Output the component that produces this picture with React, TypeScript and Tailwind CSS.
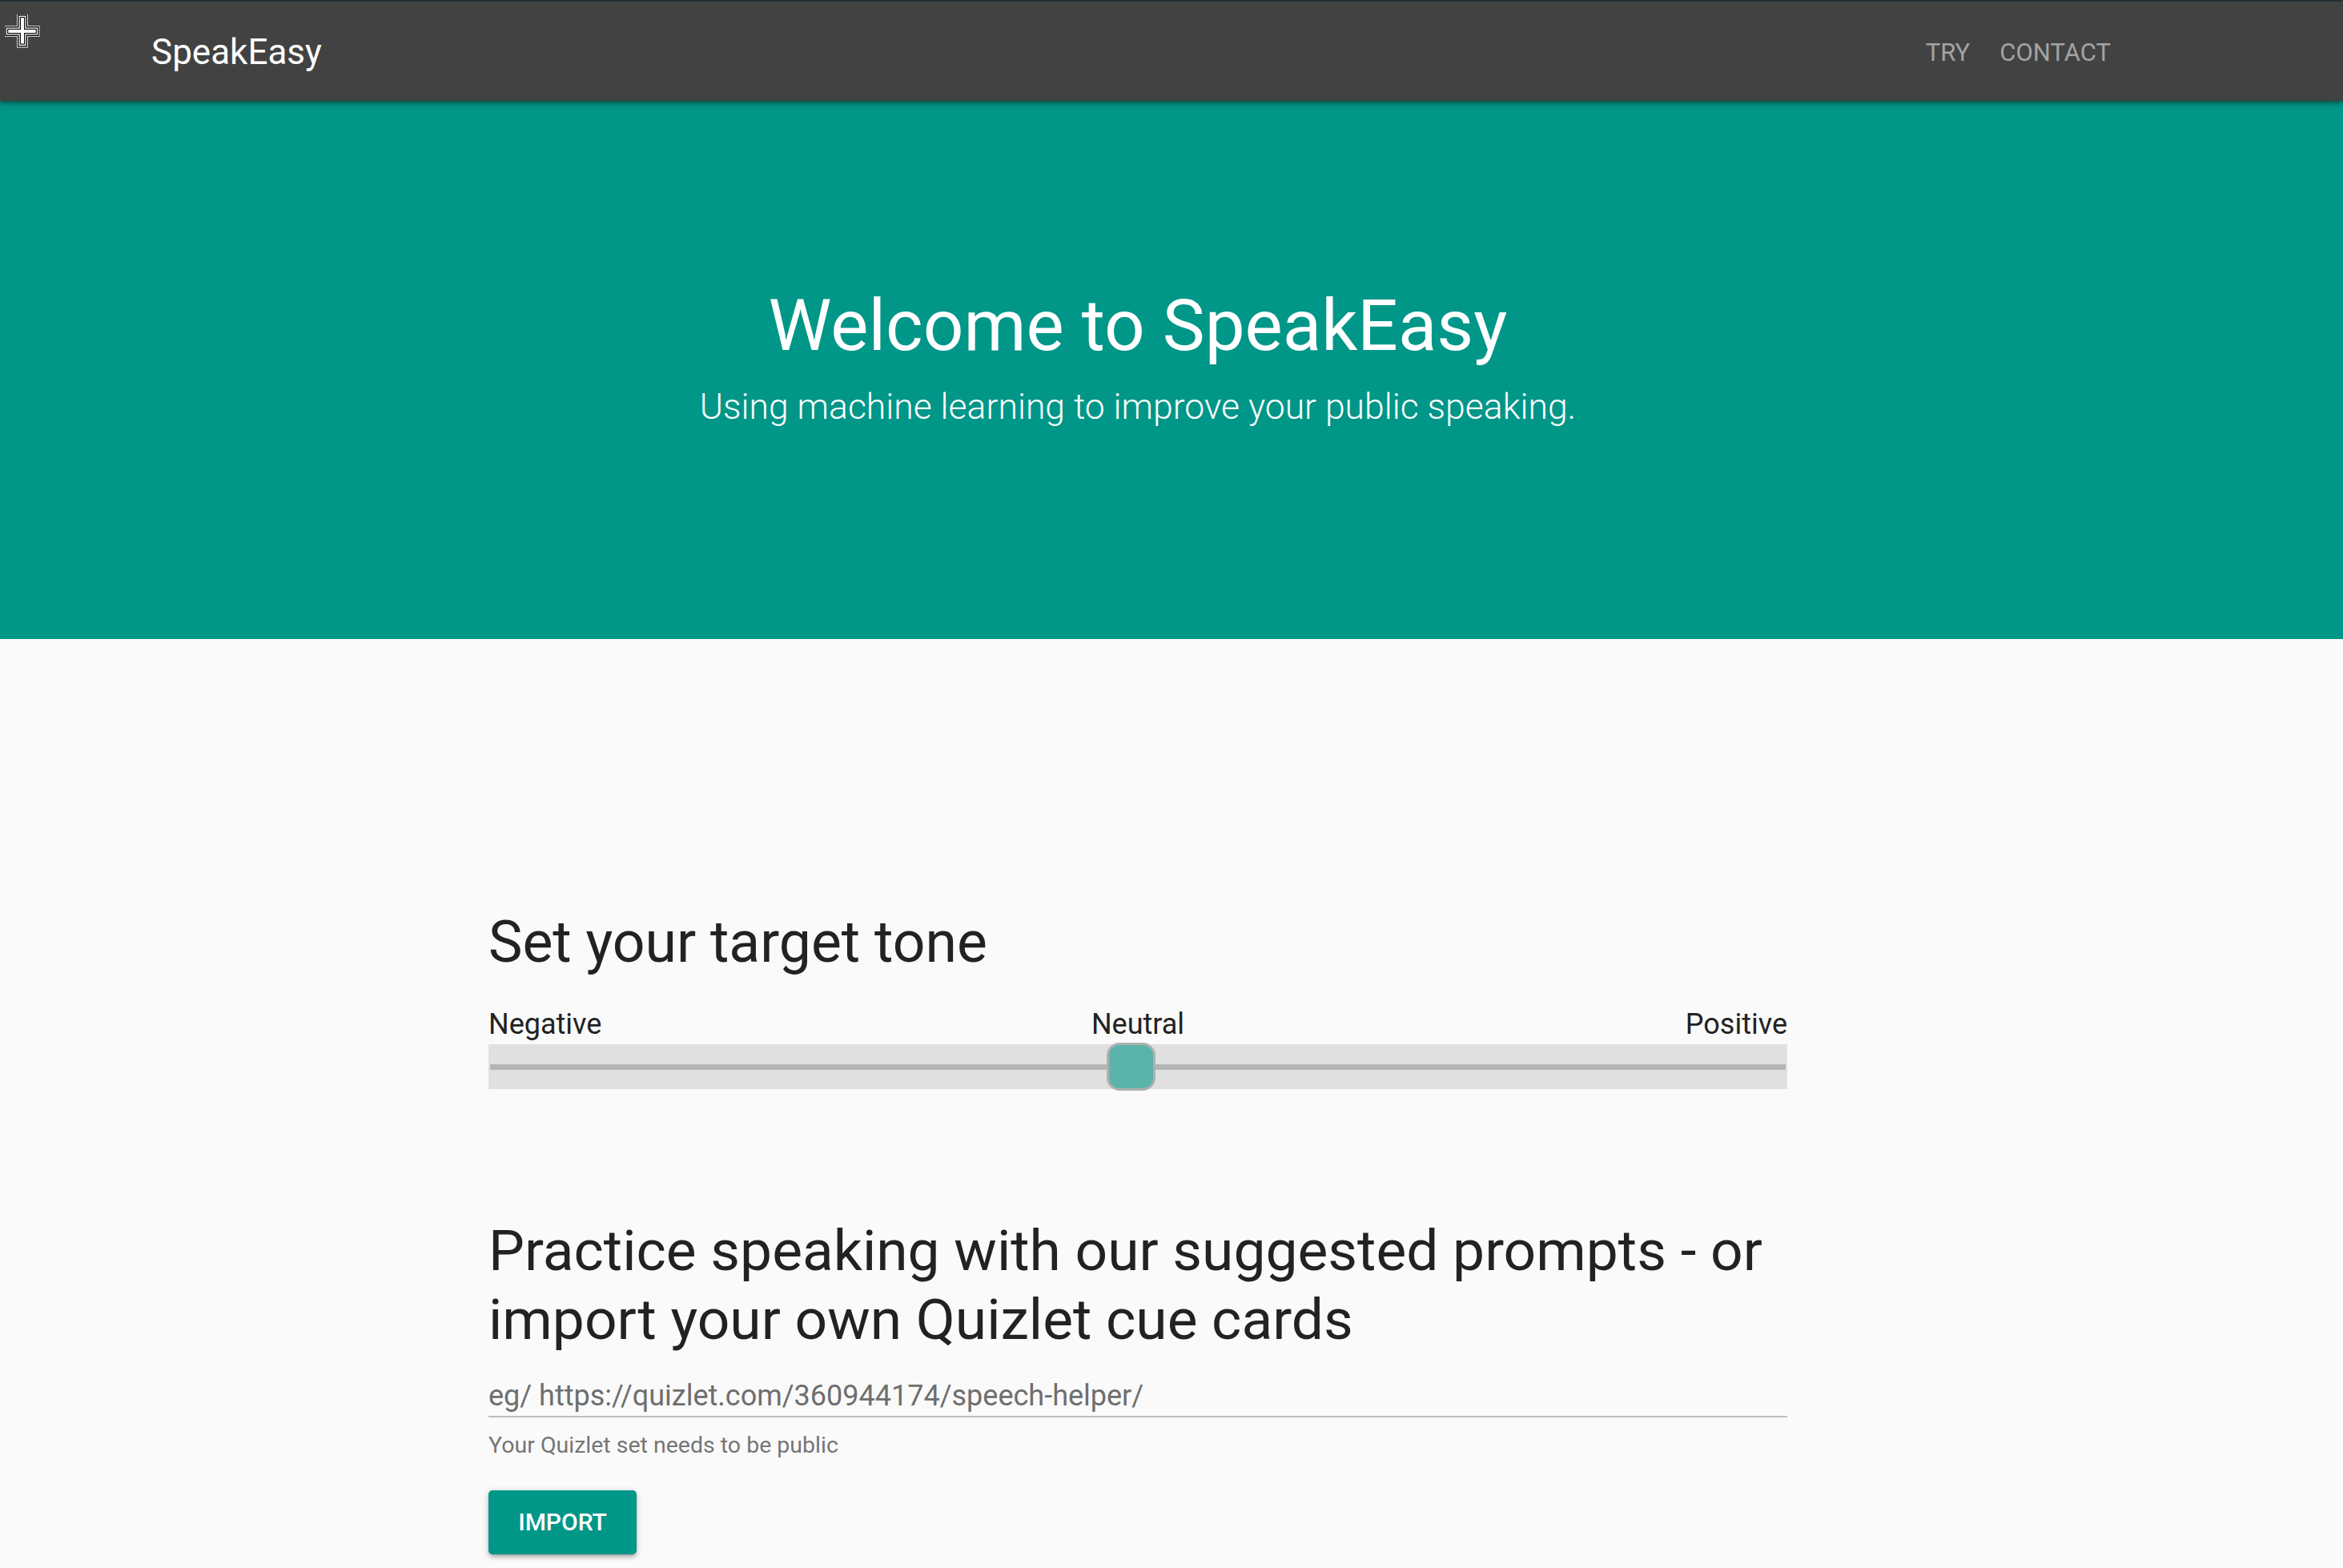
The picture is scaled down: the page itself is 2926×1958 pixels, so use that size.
import React from "react";

function CursorPlus() {
  const pts = "16,1 26,1 26,15 40,15 40,25 26,25 26,38 16,38 16,25 1,25 1,15 16,15";
  return (
    <svg
      className="pointer-events-none absolute left-[6px] top-[18px] z-30"
      width="44"
      height="42"
      viewBox="0 0 42 40"
    >
      <polygon points={pts} fill="#ffffff" stroke="#ffffff" strokeWidth="3" strokeLinejoin="miter" />
      <polygon points={pts} fill="#ffffff" stroke="#111111" strokeWidth="1.4" strokeLinejoin="miter" />
      <polygon
        points="18.5,3.5 23.5,3.5 23.5,17.5 37.5,17.5 37.5,22.5 23.5,22.5 23.5,35.5 18.5,35.5 18.5,22.5 3.5,22.5 3.5,17.5 18.5,17.5"
        fill="none"
        stroke="#111111"
        strokeWidth="1.2"
      />
    </svg>
  );
}

export default function App() {
  return (
    <div
      className="relative min-h-screen bg-[#fafafa] pb-[120px]"
      style={{ fontFamily: "Roboto, 'Noto Sans', Arial, sans-serif" }}
    >
      {/* top strip */}
      <div className="h-[2px] bg-[#263238]" />

      {/* navbar */}
      <nav className="relative z-10 flex h-[124px] items-center justify-between bg-[#424242] pl-[189px] pr-[290px] shadow-[0_4px_4px_rgba(0,0,0,0.16),0_5px_3px_-3px_rgba(0,0,0,0.14),0_2px_9px_rgba(0,0,0,0.22)]">
        <div className="pt-[2px] text-[44px] leading-none text-white">SpeakEasy</div>
        <div className="flex items-center gap-[37px] pt-[2px] text-[31px] leading-none text-[#a3a3a3]">
          <span>TRY</span>
          <span>CONTACT</span>
        </div>
      </nav>

      {/* hero */}
      <header className="h-[672px] bg-[#009688]">
        <div className="ml-[610px] flex w-[1622px] flex-col items-center pt-[237px] text-white">
          <h1 className="text-[89px] font-normal leading-[88px]">Welcome to SpeakEasy</h1>
          <p className="mt-[35px] text-[44.5px] font-light leading-[44px]">
            Using machine learning to improve your public speaking.
          </p>
        </div>
      </header>

      {/* main */}
      <main className="ml-[610px] w-[1622px] text-[#222222]">
        <h4 className="mt-[344px] text-[71.5px] font-normal leading-[70px]">Set your target tone</h4>

        <div className="mt-[50px] grid grid-cols-3 items-start text-[36px] leading-[35px]">
          <span className="text-left">Negative</span>
          <span className="text-center">Neutral</span>
          <span className="text-right">Positive</span>
        </div>

        <div className="relative mt-[7px] flex h-[56px] items-center bg-[#e0e0e0] px-[2px]">
          <div className="h-[7px] w-full bg-[#b5b5b5]" />
          <div className="absolute left-[772px] top-[-2px] h-[60px] w-[61px] rounded-[16px] border-[3px] border-[#b0b0b0] bg-[#5bb4aa]" />
        </div>

        <h4 className="mt-[159px] text-[71.3px] font-normal leading-[86px]">
          Practice speaking with our suggested prompts - or import your own Quizlet cue cards
        </h4>

        <input
          type="text"
          placeholder="eg/ https://quizlet.com/360944174/speech-helper/"
          className="mt-[19px] block h-[60px] w-full border-0 border-b-2 border-[#bdbdbd] bg-transparent p-0 pt-[8px] text-[36px] leading-[36px] text-[#222222] outline-none placeholder:text-[#6e6e6e]"
          style={{ fontFamily: "Roboto, 'Noto Sans', Arial, sans-serif" }}
        />

        <p className="mt-[21px] text-[28.5px] leading-[28px] text-[#757575]">Your Quizlet set needs to be public</p>

        <button className="mt-[42px] flex h-[80px] w-[185px] items-center justify-center rounded-[5px] bg-[#009688] text-[30px] font-medium leading-none text-white shadow-[0_4px_4px_rgba(0,0,0,0.14),0_5px_2px_-4px_rgba(0,0,0,0.12),0_2px_9px_rgba(0,0,0,0.2)]">
          IMPORT
        </button>
      </main>

      <CursorPlus />
    </div>
  );
}
